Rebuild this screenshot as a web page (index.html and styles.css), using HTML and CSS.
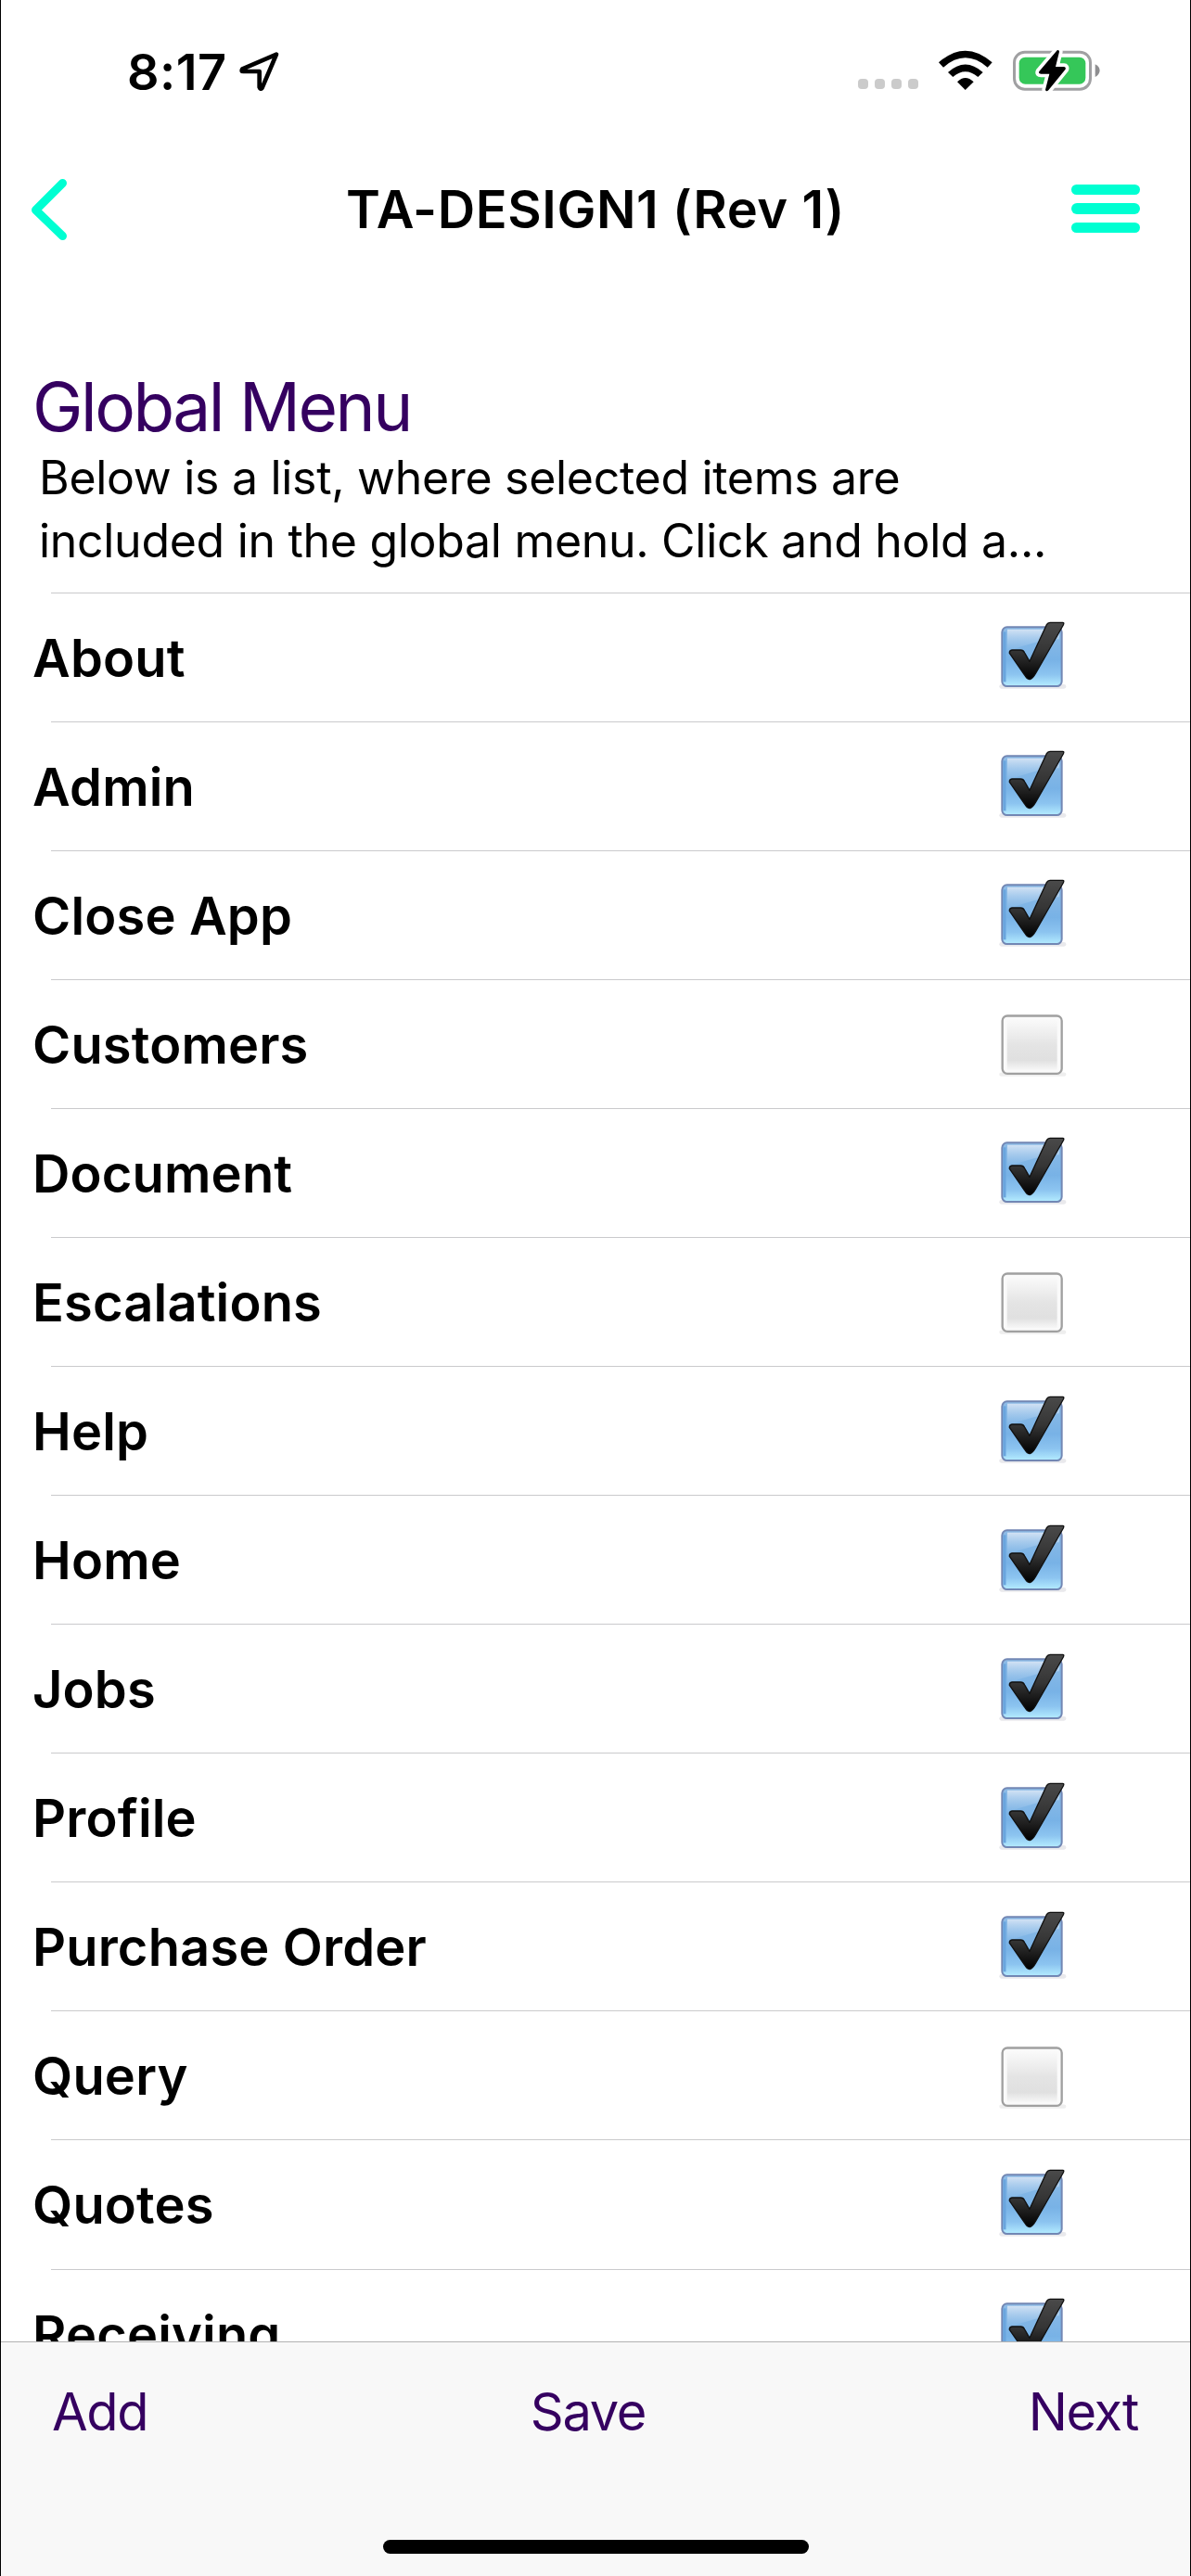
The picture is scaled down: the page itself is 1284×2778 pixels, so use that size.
FILE: index.html
```html
<!DOCTYPE html>
<html lang="en">
<head>
<meta charset="utf-8">
<title>Global Menu</title>
<link rel="stylesheet" href="styles.css">
</head>
<body>
<svg class="defs" aria-hidden="true">
  <defs>
    <linearGradient id="blue" x1="0" y1="0" x2="0" y2="1">
      <stop offset="0" stop-color="#8dbbe6"/><stop offset=".55" stop-color="#78b2e6"/>
      <stop offset=".8" stop-color="#8cc4f0"/><stop offset="1" stop-color="#b4ecff"/>
    </linearGradient>
    <linearGradient id="shine" x1="0" y1="0" x2="0" y2="1">
      <stop offset="0" stop-color="#d2e2f4"/><stop offset="1" stop-color="#8fbfea" stop-opacity=".2"/>
    </linearGradient>
    <linearGradient id="ink" x1="0" y1="0" x2="0" y2="1">
      <stop offset="0" stop-color="#4a4a4a"/><stop offset=".5" stop-color="#353535"/><stop offset="1" stop-color="#000"/>
    </linearGradient>
    <linearGradient id="grey" x1="0" y1="0" x2="0" y2="1">
      <stop offset="0" stop-color="#fafafa"/><stop offset=".5" stop-color="#e4e4e4"/>
      <stop offset=".8" stop-color="#e0e0e0"/><stop offset="1" stop-color="#f8f8f8"/>
    </linearGradient>
    <symbol id="on" viewBox="39 54 240 240">
      <rect x="52" y="264" width="216" height="14" rx="7" fill="#e9e9ec"/>
      <rect x="61" y="79" width="193" height="191" rx="16" fill="url(#blue)" stroke="#7287b4" stroke-width="6"/>
      <path d="M69 94v162" stroke="#69a5de" stroke-width="9"/>
      <path d="M78 86H246V118Q160 122 78 160Z" fill="url(#shine)"/>
      <path d="M85 163Q84 154 93 153H121Q130 153 134 162L150 190L205 71Q209 64 216 64H257Q263 64 259 72L170 228Q150 264 134 234Z" fill="url(#ink)" stroke="#101010" stroke-width="4" stroke-linejoin="round"/>
    </symbol>
    <symbol id="off" viewBox="39 45.6 240 240">
      <rect x="52" y="260" width="216" height="13" rx="6" fill="#eee"/>
      <rect x="62" y="77" width="192" height="187" rx="16" fill="#fafafa" stroke="#a0a0a0" stroke-width="7"/>
      <rect x="77" y="88" width="162" height="166" rx="5" fill="url(#grey)"/>
    </symbol>
  </defs>
</svg>
<div class="screen">
  <div class="status">
    <span class="time">8:17</span>
    <svg class="locate" viewBox="770 165 135 132"><path d="M893 176L783 223Q777 231 786 231H838V282Q841 291 847 284Z" fill="none" stroke="#000" stroke-width="14" stroke-linejoin="round"/></svg>
    <span class="dots"><i></i><i></i><i></i><i></i></span>
    <svg class="wifi" viewBox="398 160 174 129">
      <path d="M398 200Q484 124 571 200L556 216Q484 154 413 216Z"/>
      <path d="M428 232Q484 181 541 232L525 247Q484 212 444 247Z"/>
      <path d="M458 263Q484 237 511 263L484 289Z"/>
    </svg>
    <svg class="battery" viewBox="639 157 285 138">
      <rect x="643.5" y="166.500" width="246" height="120" rx="34" fill="#fff" stroke="#a0a0a2" stroke-width="9"/>
      <rect x="659" y="183" width="215" height="87" rx="20" fill="#35c759"/>
      <path d="M905 206Q919 212 920 226Q919 240 905 247Z" fill="#8e8e90"/>
      <path d="M782 161L724 229Q720 237 730 237H757L744 288Q746 296 754 290L809 222Q811 214 804 214H777L789 165Q788 158 782 161Z" fill="#000" stroke="#fff" stroke-width="22" stroke-linejoin="round"/>
      <path d="M782 161L724 229Q720 237 730 237H757L744 288Q746 296 754 290L809 222Q811 214 804 214H777L789 165Q788 158 782 161Z"/>
    </svg>
  </div>
  <header class="nav">
    <svg class="back" viewBox="0 0 40 66"><path d="M34.500 4.500L5.500 33.500L34.500 61.500" fill="none" stroke="#00ffd2" stroke-width="9" stroke-linecap="round" stroke-linejoin="round"/></svg>
    <h1 class="title">TA-DESIGN1 (Rev 1)</h1>
    <span class="burger"><i></i><i></i><i></i></span>
  </header>
  <section class="intro">
    <h2 class="heading">Global Menu</h2>
    <p class="desc">Below is a list, where selected items are<br>included in the global menu. Click and hold a...</p>
  </section>
  <ul class="list">
    <li class="row"><span class="name">About</span><svg class="box"><use href="#on"/></svg></li>
    <li class="row"><span class="name">Admin</span><svg class="box"><use href="#on"/></svg></li>
    <li class="row"><span class="name">Close App</span><svg class="box"><use href="#on"/></svg></li>
    <li class="row"><span class="name">Customers</span><svg class="box"><use href="#off"/></svg></li>
    <li class="row"><span class="name">Document</span><svg class="box"><use href="#on"/></svg></li>
    <li class="row"><span class="name">Escalations</span><svg class="box"><use href="#off"/></svg></li>
    <li class="row"><span class="name">Help</span><svg class="box"><use href="#on"/></svg></li>
    <li class="row"><span class="name">Home</span><svg class="box"><use href="#on"/></svg></li>
    <li class="row"><span class="name">Jobs</span><svg class="box"><use href="#on"/></svg></li>
    <li class="row"><span class="name">Profile</span><svg class="box"><use href="#on"/></svg></li>
    <li class="row"><span class="name">Purchase Order</span><svg class="box"><use href="#on"/></svg></li>
    <li class="row"><span class="name">Query</span><svg class="box"><use href="#off"/></svg></li>
    <li class="row"><span class="name">Quotes</span><svg class="box"><use href="#on"/></svg></li>
    <li class="row"><span class="name">Receiving</span><svg class="box"><use href="#on"/></svg></li>
  </ul>
  <footer class="toolbar">
    <div class="actions"><span>Add</span><span>Save</span><span>Next</span></div>
    <div class="home"></div>
  </footer>
</div>
</body>
</html>
```
FILE: styles.css
```css
* { box-sizing: border-box; margin: 0; padding: 0; }
body { background: #fff; color: #000; font-family: Inter, "Liberation Sans", sans-serif; }
.defs { display: block; width: 0; height: 0; }
.screen {
  display: flex; flex-direction: column; width: 1284px; height: 2778px;
  overflow: hidden; border: solid #000; border-width: 0 1px;
}
.status { display: flex; align-items: center; flex: none; height: 154px; padding-left: 136px; }
.time { width: 120px; font-size: 54px; font-weight: 600; letter-spacing: .5px; white-space: nowrap; }
.locate { width: 45px; height: 44px; flex: none; }
.dots { display: flex; gap: 7px; margin: 27px 0 0 623px; }
.dots i { width: 11px; height: 11px; border-radius: 4px; background: #cbcbcb; }
.wifi { width: 58px; height: 43px; margin: -4px 0 0 22px; flex: none; }
.battery { width: 95px; height: 46px; margin: -3px 0 0 22px; flex: none; }
.nav {
  display: grid; grid-template-columns: 1fr auto 1fr; align-items: center;
  flex: none; height: 144px; padding: 0 54px 0 32px;
}
.back { width: 40px; height: 66px; }
.title { padding-left: 22px; font-size: 56px; font-weight: 600; line-height: 70px; letter-spacing: .6px; white-space: nowrap; }
.burger { display: flex; flex-direction: column; gap: 9px; width: 74px; margin-top: -2px; justify-self: end; }
.burger i { height: 11.500px; border-radius: 6px; background: #00ffd2; }
.intro { flex: none; height: 340.500px; padding: 101px 0 0 34px; }
.heading { font-size: 73px; font-weight: 400; line-height: 80px; color: #350060; letter-spacing: -2.5px; }
.desc { padding: 2px 0 0 7px; font-size: 50px; line-height: 68px; letter-spacing: -.3px; white-space: nowrap; }
.list { flex: none; height: 1886.500px; overflow: hidden; list-style: none; }
.row {
  display: flex; align-items: center; justify-content: space-between;
  height: 139.080px; padding: 0 130px 0 34px;
  background: linear-gradient(#cacacc, #cacacc) 54px 0 / 100% 1px no-repeat;
}
.name { padding-top: 3px; font-size: 56px; font-weight: 600; letter-spacing: .15px; }
.box { width: 80px; height: 80px; flex: none; }
.toolbar {
  display: flex; flex-direction: column; align-items: center; justify-content: space-between;
  flex: 1; padding: 35px 0 24px; border-top: 1px solid #b2b2b2; background: #f8f8f8;
}
.actions {
  display: flex; justify-content: space-between; width: 100%; padding: 0 56px 0 55px;
  color: #350060; font-size: 56px; line-height: 80px; letter-spacing: -1.3px;
}
.home { width: 459px; height: 15px; border-radius: 8px; background: #000; }
```
